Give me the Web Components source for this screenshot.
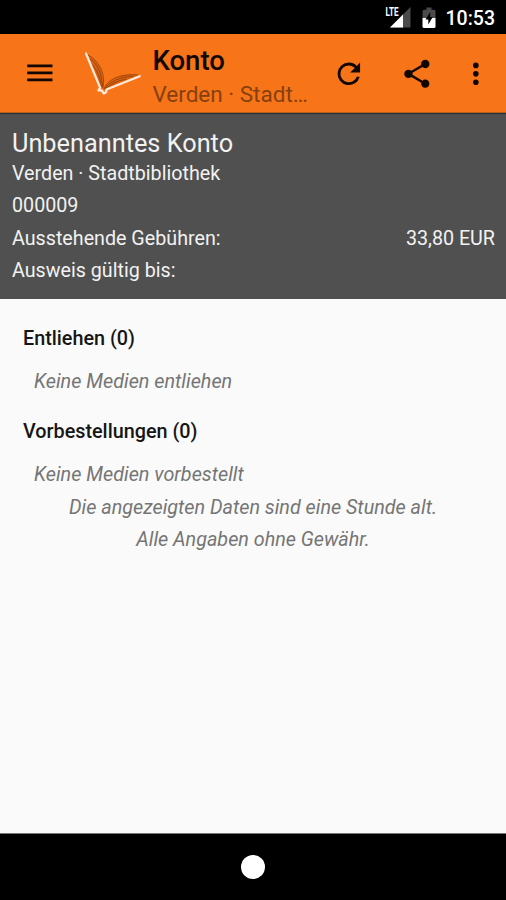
<!DOCTYPE html>
<html lang="de">
<head>
<meta charset="utf-8">
<title>Konto</title>
<style>
  html, body { margin: 0; height: 100%; }
  body { font-family: Roboto, "Liberation Sans", sans-serif; background: #fafafa; overflow: hidden; }
</style>
</head>
<body>
<account-app>
  <status-bar slot="status" time="10:53"></status-bar>
  <tool-bar slot="toolbar">
    <span slot="title">Konto</span>
    <span slot="subtitle">Verden · Stadtbibliothek</span>
  </tool-bar>
  <account-header slot="header">
    <span slot="name">Unbenanntes Konto</span>
    <info-row>Verden · Stadtbibliothek</info-row>
    <info-row>000009</info-row>
    <info-row>Ausstehende Gebühren:<span slot="value">33,80 EUR</span></info-row>
    <info-row>Ausweis gültig bis:</info-row>
  </account-header>
  <media-section heading="Entliehen (0)">Keine Medien entliehen</media-section>
  <media-section heading="Vorbestellungen (0)">Keine Medien vorbestellt</media-section>
  <foot-note>
    <div>Die angezeigten Daten sind eine Stunde alt.</div>
    <div>Alle Angaben ohne Gewähr.</div>
  </foot-note>
  <nav-bar slot="nav"></nav-bar>
</account-app>

<script>
/* Base: renders the static template of a subclass into an open root */
class BaseElement extends HTMLElement {
  constructor() {
    super();
    this.attachShadow({ mode: "open" }).innerHTML = this.constructor.template;
  }
}

/* ── Screen frame ── */
class AccountApp extends BaseElement {
  static template = `
    <style>
      :host { display: flex; flex-direction: column; height: 100vh; background: #fafafa; }
      main { flex: 1; min-height: 0; padding-top: 16px; }
    </style>
    <slot name="status"></slot>
    <slot name="toolbar"></slot>
    <slot name="header"></slot>
    <main><slot></slot></main>
    <slot name="nav"></slot>
  `;
}

/* ── Status bar ── */
class StatusBar extends BaseElement {
  static template = `
    <style>
      :host {
        display: flex; align-items: center; justify-content: flex-end;
        height: 34px; padding-right: 11px; box-sizing: border-box;
        background: #000; color: #fff;
      }
      svg { display: block; }
      .net { margin-right: 11px; }
      .bat { margin-right: 10px; }
      .lte { font: 700 12px Roboto, sans-serif; }
      time { font-size: 19.5px; font-weight: 500; line-height: 34px; padding-top: 3px; }
    </style>
    <svg class="net" width="26" height="34" viewBox="0 0 26 34">
      <path d="M25.500 7v20.500H5z" fill="#4a4a4a"/>
      <path d="M18 14.500v13H5z" fill="#fff"/>
      <path d="M0 5h14.500v12H0z" fill="#000"/>
      <text class="lte" x="0.5" y="16" fill="#fff" textLength="13" lengthAdjust="spacingAndGlyphs">LTE</text>
    </svg>
    <svg class="bat" width="14" height="34" viewBox="0 0 14 34">
      <path d="M4.500 7.500h5v2.200H12q1.500 0 1.500 1.500V18H.5v-6.800Q.5 9.700 2 9.700h2.500z" fill="#4a4a4a"/>
      <path d="M.5 18h13v8.500q0 1.500-1.500 1.500H2q-1.500 0-1.500-1.500z" fill="#fff"/>
      <path d="M8.200 12 3.500 19.500h2.800v5L10.700 17H8.200z" fill="#000"/>
    </svg>
    <time></time>
  `;
  connectedCallback() {
    this.shadowRoot.querySelector("time").textContent = this.getAttribute("time");
  }
}

/* ── Library logo: open book in outline ── */
class BookLogo extends BaseElement {
  static template = `
    <style>
      :host { display: block; flex: none; width: 60px; height: 50px; }
      svg { display: block; }
    </style>
    <svg width="60" height="50" viewBox="82 49 60 50" fill="none" stroke-linecap="round" stroke-linejoin="round">
      <path d="M88 55C97 60 105 70 103 88L101 86zM104 89C109 79 123 73 138 75z" fill="#b04c0c" fill-opacity=".45"/>
      <g stroke="#8a3a08" stroke-width=".8" stroke-opacity=".9">
        <path d="M88 55C98 60 106 72 103 88"/>
        <path d="M90 59C97 63 102 73 102.500 87"/>
        <path d="M92 65C97 69 100 77 101.500 87"/>
        <path d="M104 88.500C108 79 121 73 138 75"/>
        <path d="M104.500 89C110 82 119 76.500 133 76.500"/>
        <path d="M105 89C111 85 117 80 126 79.500"/>
      </g>
      <path d="M86 53.500 100.200 87.800 98.300 90.300 102 90.600 103.800 93.600 106.200 92 106.500 89.600 139.700 76.200" stroke="#ffe9db" stroke-width="2.200"/>
    </svg>
  `;
}

/* ── App bar ── */
class ToolBar extends BaseElement {
  static template = `
    <style>
      :host {
        display: flex; align-items: center; height: 79px; box-sizing: border-box;
        padding: 0 13px 0 23px; background: #f77418; color: #120700;
        border-bottom: 1px solid #b95f1c; position: relative;
        box-shadow: 0 1px 1px #263238;
      }
      svg { display: block; flex: none; fill: currentColor; }
      book-logo { margin: 1px 0 0 25.300px; }
      .titles { width: 157px; margin-left: 10.500px; padding-top: 8px; flex: none; }
      .title, .sub { white-space: nowrap; overflow: hidden; text-overflow: ellipsis; }
      .title { font-size: 27.500px; font-weight: 500; line-height: 34px; }
      .sub { font-size: 22.500px; line-height: 33px; color: #86400f; }
      .actions { display: flex; align-items: center; margin-left: auto; padding-top: 1px; }
      .share { margin-left: 34px; }
      .more { margin-left: 26px; }
    </style>
    <svg width="33.700" height="33.700" viewBox="0 0 24 24"><path d="M3 18h18v-2H3zm0-5h18v-2H3zm0-7v2h18V6z"/></svg>
    <book-logo></book-logo>
    <div class="titles">
      <div class="title"><slot name="title"></slot></div>
      <div class="sub"><slot name="subtitle"></slot></div>
    </div>
    <div class="actions">
      <svg width="33.700" height="33.700" viewBox="0 0 24 24"><path d="M17.650 6.350A7.960 7.960 0 0 0 12 4a8 8 0 1 0 7.730 10h-2.080A6 6 0 1 1 12 6c1.660 0 3.140.690 4.220 1.780L13 11h7V4z"/></svg>
      <svg class="share" width="33.700" height="33.700" viewBox="0 0 24 24"><path d="M18 16.080c-.760 0-1.440.300-1.960.770L8.910 12.700c.050-.230.090-.460.090-.700s-.040-.470-.090-.700l7.050-4.110c.540.500 1.250.810 2.040.810 1.660 0 3-1.340 3-3s-1.340-3-3-3-3 1.340-3 3c0 .240.040.470.090.700L8.040 9.810C7.500 9.310 6.790 9 6 9c-1.660 0-3 1.340-3 3s1.340 3 3 3c.790 0 1.500-.310 2.040-.810l7.120 4.160c-.050.210-.080.430-.080.650 0 1.610 1.310 2.920 2.920 2.920s2.920-1.310 2.920-2.920-1.310-2.920-2.920-2.920z"/></svg>
      <svg class="more" width="33.700" height="33.700" viewBox="0 0 24 24"><path d="M12 8a2 2 0 1 0 0-4 2 2 0 0 0 0 4zm0 2a2 2 0 1 0 0 4 2 2 0 0 0 0-4zm0 6a2 2 0 1 0 0 4 2 2 0 0 0 0-4z"/></svg>
    </div>
  `;
}

/* ── Account summary ── */
class AccountHeader extends BaseElement {
  static template = `
    <style>
      :host {
        display: block; height: 186px; box-sizing: border-box;
        padding: 16px 11px 0 12px; background: #505050; color: #f2f2f2;
      }
      .name { font-size: 25.300px; line-height: 29px; }
    </style>
    <div class="name"><slot name="name"></slot></div>
    <slot></slot>
  `;
}

class InfoRow extends BaseElement {
  static template = `
    <style>
      :host { display: flex; justify-content: space-between; font-size: 19.700px; line-height: 32.300px; }
    </style>
    <span><slot></slot></span>
    <slot name="value"></slot>
  `;
}

/* ── List of media with a heading ── */
class MediaSection extends BaseElement {
  static template = `
    <style>
      :host { display: block; height: 93px; padding-left: 23px; font-size: 19.800px; }
      h2 { margin: 0; font: inherit; font-weight: 500; line-height: 48px; color: #161616; }
      p { margin: 0 0 0 11px; line-height: 37px; font-style: italic; color: #757575; }
    </style>
    <h2></h2>
    <p><slot></slot></p>
  `;
  connectedCallback() {
    this.shadowRoot.querySelector("h2").textContent = this.getAttribute("heading");
  }
}

class FootNote extends BaseElement {
  static template = `
    <style>
      :host {
        display: block; margin-top: -9px; text-align: center; font-size: 19.750px;
        line-height: 32.300px; font-style: italic; color: #757575;
      }
    </style>
    <slot></slot>
  `;
}

/* ── Navigation bar with the home button ── */
class NavBar extends BaseElement {
  static template = `
    <style>
      :host {
        display: flex; align-items: center; justify-content: center;
        height: 67px; box-sizing: border-box; background: #000;
        border-top: 1px solid #777;
      }
      i { width: 24px; height: 24px; border-radius: 50%; background: #fff; }
    </style>
    <i></i>
  `;
}

customElements.define("account-app", AccountApp);
customElements.define("status-bar", StatusBar);
customElements.define("book-logo", BookLogo);
customElements.define("tool-bar", ToolBar);
customElements.define("account-header", AccountHeader);
customElements.define("info-row", InfoRow);
customElements.define("media-section", MediaSection);
customElements.define("foot-note", FootNote);
customElements.define("nav-bar", NavBar);
</script>
</body>
</html>
